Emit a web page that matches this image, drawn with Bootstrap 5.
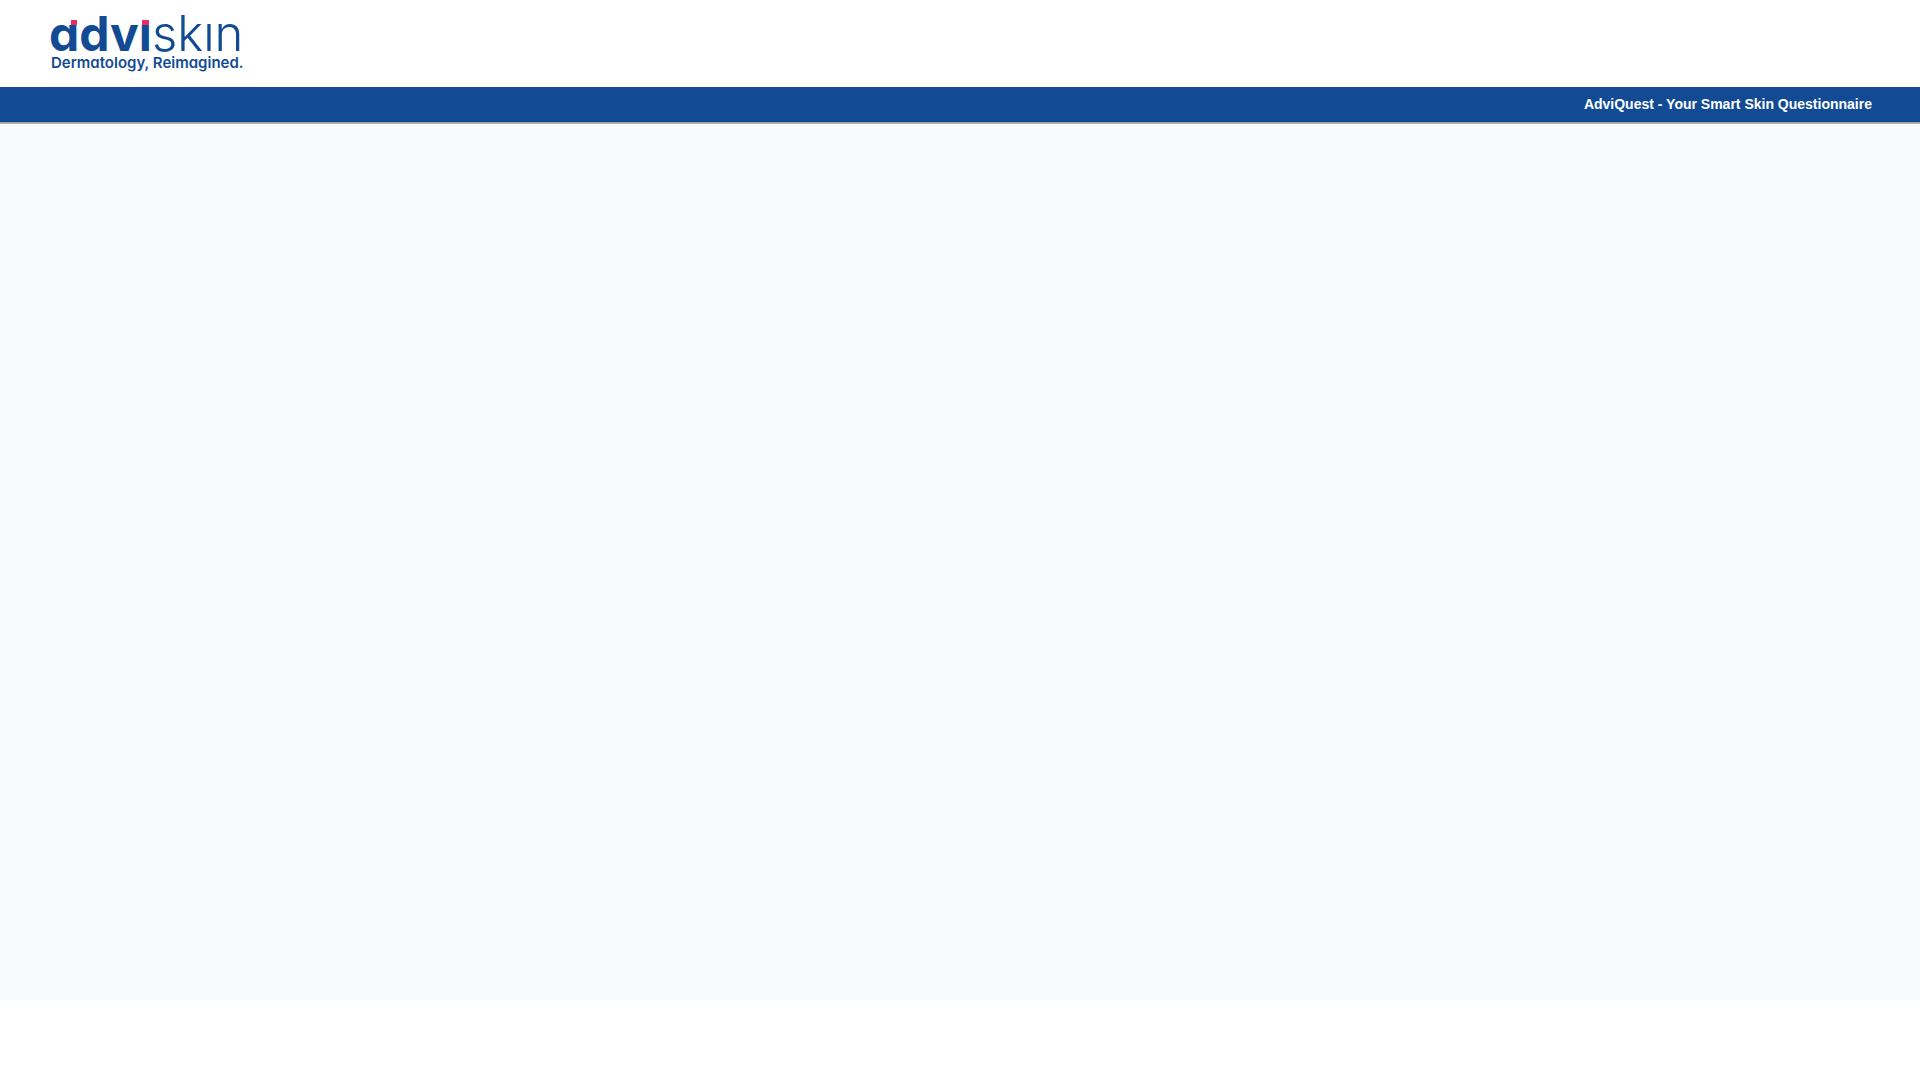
<!DOCTYPE html>
<html lang="en">
<head>
<meta charset="utf-8">
<meta name="viewport" content="width=device-width, initial-scale=1">
<title>AdviQuest</title>
<link rel="stylesheet" href="https://cdn.jsdelivr.net/npm/bootstrap@5.3.0/dist/css/bootstrap.min.css">
<style>
body { font-family: "Liberation Sans", Arial, sans-serif; }
.site-header { padding: 0 48px; }
.logo { width: 200px; height: 87px; }
.logo text { fill: #124b94; }
.logo-bold { font: 700 48px Inter, sans-serif; font-feature-settings: "cv11"; }
.logo-light { font: 300 49px Inter, sans-serif; }
.logo-tagline { font: 600 15px Inter, sans-serif; font-feature-settings: "cv11"; }
.title-bar { background: #124b94; padding: 0 48px; box-shadow: 0 1px 0 #a0a0a4, 0 2px 0 #b4b4b6; font-size: 14px; line-height: 35px; }
.page-content { background: #f8fafc; min-height: calc(100vh - 202px); }
</style>
</head>
<body>
<header>
  <div class="site-header d-flex align-items-center bg-white">
    <a href="#" class="d-block" aria-label="adviskin home">
      <svg class="logo d-block" viewBox="48 0 200 87">
        <text class="logo-bold" x="49" y="51">advi</text>
        <text class="logo-light" x="152" y="51">skin</text>
        <rect x="201" y="10" width="12" height="13" fill="#fff"/>
        <rect x="140" y="10" width="11" height="15" fill="#fff"/>
        <rect x="142" y="20" width="7" height="5" fill="#ee2a63"/>
        <rect x="71" y="20" width="6" height="5" fill="#ee2a63"/>
        <text class="logo-tagline" x="51" y="68">Dermatology, Reimagined.</text>
      </svg>
    </a>
  </div>
  <div class="title-bar position-relative text-white text-end fw-bold">AdviQuest - Your Smart Skin Questionnaire</div>
</header>
<main class="page-content"></main>
<script src="https://cdn.jsdelivr.net/npm/bootstrap@5.3.0/dist/js/bootstrap.bundle.min.js"></script>
</body>
</html>
